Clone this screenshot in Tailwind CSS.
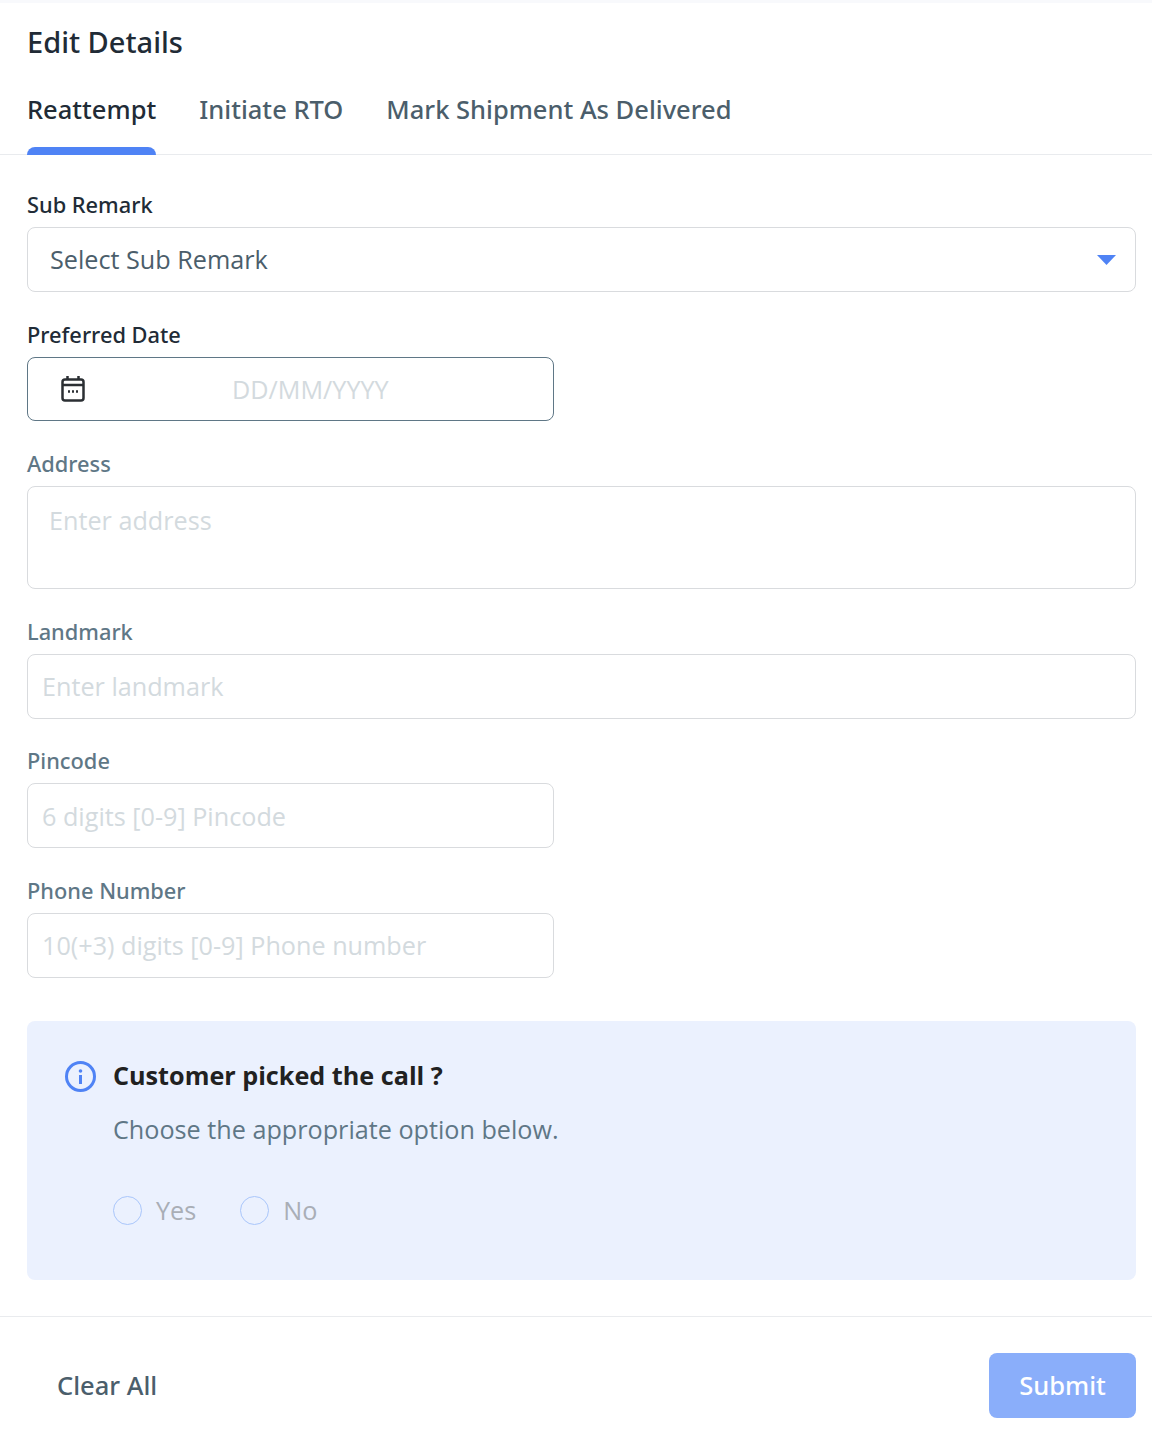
<!DOCTYPE html>
<html lang="en">
<head>
  <meta charset="UTF-8"/>
  <title>Edit Details</title>
  <script src="https://cdn.jsdelivr.net/npm/@tailwindcss/browser@4"></script>
</head>
<body class="bg-white font-['Open_Sans',sans-serif] w-[1152px] h-[1444px] overflow-hidden">
  <div class="h-[3px] bg-[#f8f9fc]"></div>
  <h1 class="pl-[27px] pt-[17px] h-[61px] font-['Noto_Sans',sans-serif] text-[29px] leading-[43px] font-medium text-[#212b36]">Edit Details</h1>

  <!-- tabs -->
  <div class="flex gap-[43px] pl-[27px] h-[91px] border-b border-[#e9ebee] font-['Noto_Sans',sans-serif] text-[25.500px] leading-[44px] font-medium">
    <div class="relative pt-[23px] text-[#212b36]">Reattempt
      <div class="absolute left-0 right-0 bottom-[-1px] h-[8px] rounded-t-[8px] bg-[#4f83f5]"></div>
    </div>
    <div class="pt-[23px] text-[#4b5e6b]">Initiate RTO</div>
    <div class="pt-[23px] text-[#4b5e6b]">Mark Shipment As Delivered</div>
  </div>

  <form class="pl-[27px] pr-[16px] pt-[39px]">
    <label class="block h-[22px] mb-[11px] font-['Noto_Sans',sans-serif] text-[21.800px] leading-[22px] font-medium text-[#212b36]">Sub Remark</label>
    <div class="flex items-center justify-between h-[65px] pl-[22px] pr-[19px] border border-[#d9dbde] rounded-[8px]">
      <span class="text-[25.200px] text-[#4b5e6b]">Select Sub Remark</span>
      <svg width="19" height="10" viewBox="0 0 19 10"><path d="M0 0h19L9.500 10z" fill="#4f83f5"/></svg>
    </div>

    <label class="block h-[22px] mt-[32px] mb-[11px] font-['Noto_Sans',sans-serif] text-[21.800px] leading-[22px] font-medium text-[#212b36]">Preferred Date</label>
    <div class="flex items-center w-[527px] h-[64px] pl-[32px] border border-[#5f7786] rounded-[8px]">
      <svg width="26" height="28" viewBox="0 0 26 28" fill="none" stroke="#2b2f33" stroke-width="2.500">
        <rect x="2.500" y="4.500" width="21" height="21" rx="2.500"/>
        <path d="M2.500 10h21M7.500 1v4M18.500 1v4"/>
        <path d="M8 16.500h2M12 16.500h2M16 16.500h2" stroke-width="2.500"/>
      </svg>
      <span class="ml-[146px] pt-[1px] text-[25.200px] text-[#d3dade]">DD/MM/YYYY</span>
    </div>

    <label class="block h-[22px] mt-[32px] mb-[11px] font-['Noto_Sans',sans-serif] text-[21.800px] leading-[22px] font-medium text-[#5f7786]">Address</label>
    <div class="h-[103px] pl-[21px] pt-[14px] border border-[#d9dbde] rounded-[8px] text-[25.200px] leading-[38px] text-[#d3dade]">Enter address</div>

    <label class="block h-[22px] mt-[32px] mb-[11px] font-['Noto_Sans',sans-serif] text-[21.800px] leading-[22px] font-medium text-[#5f7786]">Landmark</label>
    <div class="flex items-center h-[65px] pl-[14px] border border-[#d9dbde] rounded-[8px] text-[25.200px] text-[#d3dade]">Enter landmark</div>

    <label class="block h-[22px] mt-[31px] mb-[11px] font-['Noto_Sans',sans-serif] text-[21.800px] leading-[22px] font-medium text-[#5f7786]">Pincode</label>
    <div class="flex items-center w-[527px] h-[65px] pl-[14px] pt-[2px] border border-[#d9dbde] rounded-[8px] text-[25.200px] text-[#d3dade]">6 digits [0-9] Pincode</div>

    <label class="block h-[22px] mt-[32px] mb-[11px] font-['Noto_Sans',sans-serif] text-[21.800px] leading-[22px] font-medium text-[#5f7786]">Phone Number</label>
    <div class="flex items-center w-[527px] h-[65px] pl-[14px] border border-[#d9dbde] rounded-[8px] text-[25.200px] text-[#d3dade]">10(+3) digits [0-9] Phone number</div>

    <!-- info box -->
    <div class="mt-[43px] h-[259px] pl-[38px] pt-[36px] rounded-[8px] bg-[#ebf1fe]">
      <div class="flex items-center h-[38px] gap-[17px]">
        <svg width="31" height="31" viewBox="0 0 31 31" fill="none">
          <circle cx="15.500" cy="15.500" r="14" stroke="#4f83f5" stroke-width="3"/>
          <circle cx="15.500" cy="10" r="1.800" fill="#4f83f5"/>
          <path d="M15.500 14v9" stroke="#4f83f5" stroke-width="3"/>
        </svg>
        <span class="text-[25.200px] font-bold text-[#212121]">Customer picked the call ?</span>
      </div>
      <p class="mt-[15px] ml-[48px] text-[25.200px] leading-[38px] text-[#5f7786]">Choose the appropriate option below.</p>
      <div class="flex items-center mt-[43px] ml-[48px] text-[25.200px] leading-[38px] text-[#a9aeb6]">
        <span class="w-[29px] h-[29px] rounded-full border border-[#a9c6fb]"></span>
        <span class="ml-[14px]">Yes</span>
        <span class="ml-[44px] w-[29px] h-[29px] rounded-full border border-[#a9c6fb]"></span>
        <span class="ml-[14px]">No</span>
      </div>
    </div>
  </form>

  <!-- footer -->
  <div class="flex items-center justify-between mt-[36px] pl-[57px] pr-[16px] pt-[36px] border-t border-[#e9ebee] font-['Noto_Sans',sans-serif]">
    <span class="text-[25.500px] font-medium text-[#4b5e6b]">Clear All</span>
    <button type="button" class="w-[147px] h-[65px] rounded-[8px] bg-[#8aaefa] text-[25.500px] font-medium text-white">Submit</button>
  </div>
</body>
</html>
